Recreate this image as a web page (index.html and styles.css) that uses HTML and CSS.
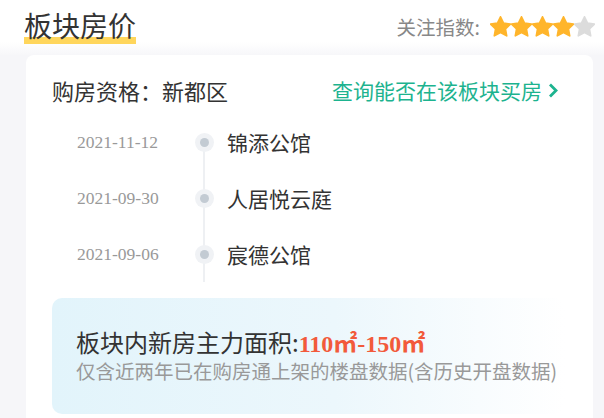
FILE: index.html
```html
<!DOCTYPE html>
<html lang="zh-CN">
  <head>
    <meta charset="UTF-8" />
    <meta name="viewport" content="width=device-width, initial-scale=1.0" />
    <title>板块房价</title>
    <link rel="stylesheet" href="styles.css">
  </head>
  <body>
    <header class="top">
      <h1 class="title"><span>板块房价</span></h1>
      <div class="rating">
        关注指数:
        <span class="stars">
          <svg width="21" height="21" viewBox="2 2 20 20"><path class="on" d="M12 2.8l2.9 6 6.6.9-4.8 4.6 1.2 6.6L12 17.7l-5.9 3.2 1.2-6.6-4.8-4.6 6.6-.9z"/></svg>
          <svg width="21" height="21" viewBox="2 2 20 20"><path class="on" d="M12 2.8l2.9 6 6.6.9-4.8 4.6 1.2 6.6L12 17.7l-5.9 3.2 1.2-6.6-4.8-4.6 6.6-.9z"/></svg>
          <svg width="21" height="21" viewBox="2 2 20 20"><path class="on" d="M12 2.8l2.9 6 6.6.9-4.8 4.6 1.2 6.6L12 17.7l-5.9 3.2 1.2-6.6-4.8-4.6 6.6-.9z"/></svg>
          <svg width="21" height="21" viewBox="2 2 20 20"><path class="on" d="M12 2.8l2.9 6 6.6.9-4.8 4.6 1.2 6.6L12 17.7l-5.9 3.2 1.2-6.6-4.8-4.6 6.6-.9z"/></svg>
          <svg width="21" height="21" viewBox="2 2 20 20"><path class="off" d="M12 2.8l2.9 6 6.6.9-4.8 4.6 1.2 6.6L12 17.7l-5.9 3.2 1.2-6.6-4.8-4.6 6.6-.9z"/></svg>
        </span>
      </div>
    </header>

    <section class="card">
      <div class="qual-row">
        <div class="qual">购房资格：新都区</div>
        <a class="check-link" href="#">
          查询能否在该板块买房
          <svg width="11" height="15" viewBox="0 0 11 15"><path d="M2 1.5l6 6-6 6" fill="none" stroke="#1db38f" stroke-width="2.8"/></svg>
        </a>
      </div>

      <ul class="timeline">
        <li><span class="date">2021-11-12</span><span class="node"><i></i></span><span class="name">锦添公馆</span></li>
        <li><span class="date">2021-09-30</span><span class="node"><i></i></span><span class="name">人居悦云庭</span></li>
        <li><span class="date">2021-09-06</span><span class="node"><i></i></span><span class="name">宸德公馆</span></li>
      </ul>

      <!-- main area box -->
      <div class="area-box">
        <p class="area-main">板块内新房主力面积:<span class="area-num">110㎡-150㎡</span></p>
        <p class="area-note">仅含近两年已在购房通上架的楼盘数据(含历史开盘数据)</p>
      </div>
    </section>
  </body>
</html>
```

FILE: styles.css
```css
/* Basic styles */
body {
  margin: 0;
  min-height: 100vh;
  font-family: "Noto Sans CJK SC", "Noto Sans", sans-serif;
  background: linear-gradient(#ffffff 0, #ffffff 42px, #f6f6f9 56px);
  color: #333;
}

.top {
  display: flex;
  justify-content: space-between;
  align-items: center;
  height: 48px;
  padding: 5px 9px 0 24px;
  box-sizing: border-box;
}

.title {
  margin: 0;
  font-size: 28px;
  font-weight: normal;
  line-height: 32px;
}

.title span {
  display: inline-block;
  height: 35px;
  background: linear-gradient(to bottom, transparent 28px, #ffd65c 28px);
}

.rating {
  display: flex;
  align-items: center;
  font-size: 19.5px;
  line-height: 32px;
  color: #888;
}

.stars {
  display: flex;
  gap: 0;
  margin-left: 10px;
}

.stars path {
  stroke-width: 1.6;
  stroke-linejoin: round;
}

.stars .on {
  fill: #ffb52b;
  stroke: #ffb52b;
}

.stars .off {
  fill: #dcdcdc;
  stroke: #dcdcdc;
}

.card {
  margin: 7px 11px 0 26px;
  padding: 20px 28px 20px 26px;
  background-color: #ffffff;
  border-radius: 8px 8px 0 0;
}

.qual-row {
  display: flex;
  justify-content: space-between;
  align-items: center;
  line-height: 30px;
  padding-right: 6px;
}

.qual {
  font-size: 22px;
}

.check-link {
  display: flex;
  align-items: center;
  gap: 6px;
  font-size: 21px;
  color: #1db38f;
  text-decoration: none;
}

.timeline {
  list-style: none;
  margin: 9px 0 0;
  padding: 0;
}

.timeline li {
  display: flex;
  align-items: center;
  height: 56px;
}

.date {
  width: 141px;
  padding-left: 25px;
  box-sizing: border-box;
  font-family: "Liberation Serif", serif;
  font-size: 17.5px;
  color: #999;
}

.node {
  position: relative;
  width: 22px;
  height: 100%;
  display: flex;
  align-items: center;
  justify-content: center;
}

.node::before {
  content: "";
  position: absolute;
  left: 10px;
  top: 0;
  bottom: 0;
  width: 2px;
  background-color: #eef0f3;
}

.timeline li:first-child .node::before {
  top: 50%;
}

.node i {
  position: relative;
  width: 9px;
  height: 9px;
  border-radius: 50%;
  background-color: #c3cbd3;
  box-shadow: 0 0 0 5px #f0f2f5;
}

.name {
  margin-left: 12px;
  font-size: 21px;
}

.area-box {
  margin-top: 16px;
  padding: 30px 0 30px 24px;
  border-radius: 10px;
  background: linear-gradient(90deg, #e2f4fb 0%, #ecf7fc 55%, #ffffff 100%);
}

.area-box p {
  margin: 0;
  white-space: nowrap;
}

.area-main {
  font-size: 24px;
  line-height: 28px;
}

.area-num {
  font-family: "Liberation Serif", "Noto Sans CJK SC", serif;
  font-weight: bold;
  color: #f25a3b;
}

.area-note {
  font-size: 19.5px;
  line-height: 26px;
  color: #999;
}
```
